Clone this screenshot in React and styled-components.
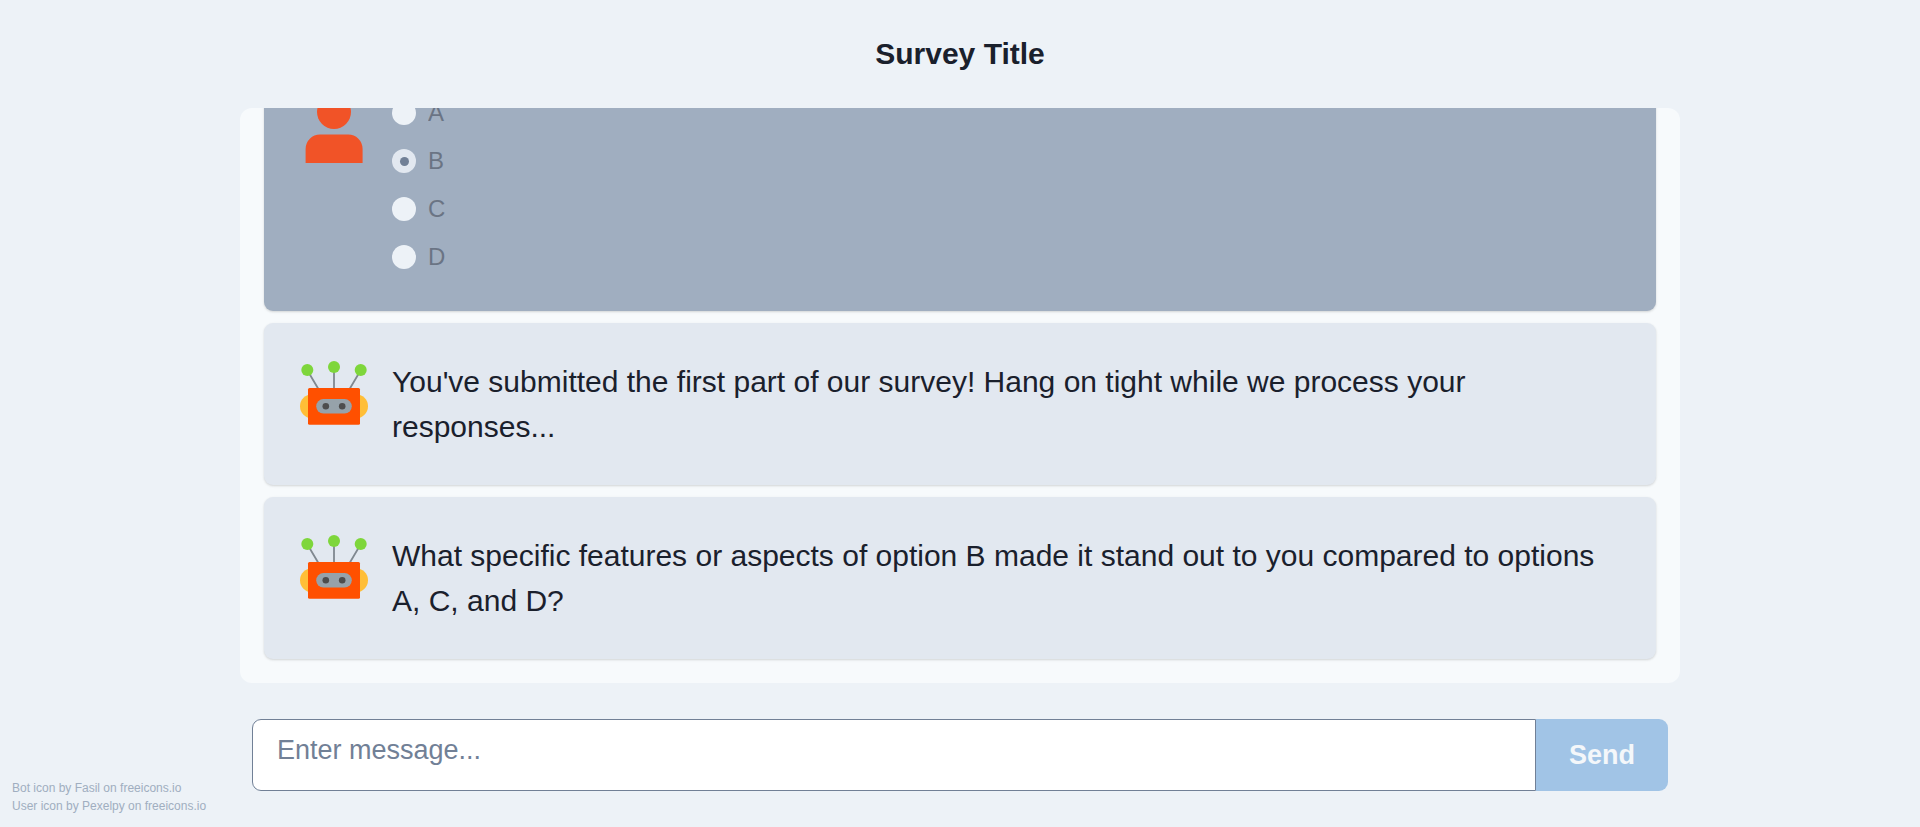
import React from "react";
import styled, { createGlobalStyle } from "styled-components";

const GlobalStyle = createGlobalStyle`
  * { box-sizing: border-box; }
  body {
    margin: 0;
    background: #edf2f7;
    color: #1a202c;
    font-family: "Liberation Sans", Arial, sans-serif;
    font-size: 24px;
    line-height: 1.5;
  }
`;

const Page = styled.div`
  height: 100vh;
  display: grid;
  grid-template-columns: 1fr 1440px 1fr;
  overflow: hidden;
`;

const Main = styled.main`
  grid-column: 2;
  display: flex;
  flex-direction: column;
  padding-bottom: 36px;
  min-height: 0;
`;

const Title = styled.h1`
  margin: 0;
  height: 108px;
  padding-bottom: 2px;
  flex: none;
  display: flex;
  align-items: center;
  justify-content: center;
  font-size: 30px;
  font-weight: 700;
`;

const Conversation = styled.section`
  flex: 1;
  min-height: 0;
  display: flex;
  flex-direction: column;
  justify-content: flex-end;
  gap: 12px;
  padding: 24px;
  overflow: hidden;
  border-radius: 12px;
  background: #f7fafc;
`;

const Card = styled.article`
  flex: none;
  display: flex;
  align-items: flex-start;
  gap: 24px;
  padding: 36px;
  border-radius: 9px;
  background: ${(p) => (p.$user ? "#a0aec0" : "#e2e8f0")};
  box-shadow: 0 1px 3px 0 rgba(0, 0, 0, 0.1), 0 1px 2px 0 rgba(0, 0, 0, 0.06);
`;

const Avatar = styled.svg`
  flex: none;
  width: 68px;
  height: 68px;
`;

const Message = styled.p`
  margin: 0;
  flex: 1;
  font-size: 30px;
  line-height: 45px;
`;

const Options = styled.div`
  display: flex;
  flex-direction: column;
  gap: 12px;
`;

const Option = styled.label`
  display: flex;
  align-items: center;
  gap: 12px;
  height: 36px;
`;

const OptionText = styled.span`
  opacity: 0.4;
`;

const Radio = styled.span`
  width: 24px;
  height: 24px;
  border-radius: 50%;
  display: flex;
  align-items: center;
  justify-content: center;
  background: ${(p) => (p.$checked ? "#e2e8f0" : "#edf2f7")};

  &::before {
    content: "";
    width: 9px;
    height: 9px;
    border-radius: 50%;
    background: ${(p) => (p.$checked ? "#718096" : "transparent")};
  }
`;

const Composer = styled.form`
  flex: none;
  display: flex;
  height: 72px;
  margin: 36px 12px 0;
`;

const MessageInput = styled.textarea`
  flex: 1;
  min-width: 0;
  height: 72px;
  padding: 12px 24px;
  border: 1px solid #718096;
  border-radius: 9px 0 0 9px;
  background: #fff;
  color: inherit;
  font: 27px/37px "Liberation Sans", Arial, sans-serif;
  resize: none;
  outline: none;
  overflow: hidden;

  &::placeholder {
    color: #718096;
    opacity: 1;
  }
`;

const SendButton = styled.button`
  width: 132px;
  padding: 0;
  border: 0;
  border-radius: 0 9px 9px 0;
  background: #3182ce;
  color: #fff;
  opacity: 0.4;
  font: 700 27px/1.2 "Liberation Sans", Arial, sans-serif;
`;

const Credits = styled.footer`
  grid-column: 1;
  grid-row: 1;
  align-self: end;
  padding: 0 0 12px 12px;
  color: #a0aec0;
  font-size: 12px;
  line-height: 18px;
`;

const Credit = styled.div`
  white-space: nowrap;
`;

function BotIcon() {
  return (
    <Avatar viewBox="0 0 68 68" aria-hidden="true">
      <path d="M7.3 11.3L19 31M34 8v23M60.7 11.3L49 31" fill="none" stroke="#808890" strokeWidth="1.8" />
      <g fill="#7ed63b">
        <circle cx="7.3" cy="11" r="6" />
        <circle cx="34" cy="8" r="6" />
        <circle cx="60.7" cy="11" r="6" />
      </g>
      <g fill="#ffbe37">
        <circle cx="12" cy="47.2" r="12" />
        <circle cx="56" cy="47.2" r="12" />
      </g>
      <rect x="8" y="29" width="52" height="36.8" rx="1.5" fill="#ff5000" />
      <rect x="16.2" y="40" width="35.6" height="14.6" rx="7.3" fill="#96a2aa" />
      <g fill="#4d4d4d">
        <circle cx="25.8" cy="47.3" r="3.3" />
        <circle cx="42.2" cy="47.3" r="3.3" />
      </g>
    </Avatar>
  );
}

function UserIcon() {
  return (
    <Avatar viewBox="0 0 68 68" aria-hidden="true">
      <g fill="#f15327">
        <circle cx="34" cy="17" r="17" />
        <path d="M5.6 68V54a14.4 14.4 0 0 1 14.4-14.4h28.2A14.4 14.4 0 0 1 62.6 54v14z" />
      </g>
    </Avatar>
  );
}

function BotMessage({ children }) {
  return (
    <Card>
      <BotIcon />
      <Message>{children}</Message>
    </Card>
  );
}

export default function App() {
  return (
    <>
      <GlobalStyle />
      <Page>
        <Main>
          <Title>Survey Title</Title>
          <Conversation>
            <Card $user>
              <UserIcon />
              <Options>
                {["A", "B", "C", "D"].map((name) => (
                  <Option key={name}>
                    <Radio $checked={name === "B"} />
                    <OptionText>{name}</OptionText>
                  </Option>
                ))}
              </Options>
            </Card>
            <BotMessage>
              You've submitted the first part of our survey! Hang on tight while we process your responses...
            </BotMessage>
            <BotMessage>
              What specific features or aspects of option B made it stand out to you compared to options A, C, and D?
            </BotMessage>
          </Conversation>
          <Composer>
            <MessageInput placeholder="Enter message..." />
            <SendButton type="button" disabled>Send</SendButton>
          </Composer>
        </Main>
        <Credits>
          <Credit>Bot icon by Fasil on freeicons.io</Credit>
          <Credit>User icon by Pexelpy on freeicons.io</Credit>
        </Credits>
      </Page>
    </>
  );
}
